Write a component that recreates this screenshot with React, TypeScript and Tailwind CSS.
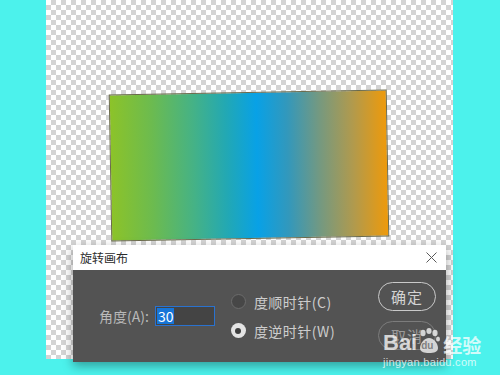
import React from 'react';

const CJK = "font-['Noto_Sans_CJK_SC','Noto_Sans',sans-serif]";

function CloseIcon() {
  return (
    <svg width="11" height="11" viewBox="0 0 11 11" className="shrink-0">
      <path d="M0.5 0.5 L10.5 10.5 M10.5 0.5 L0.5 10.5" stroke="#5a5a5a" strokeWidth="1" />
    </svg>
  );
}

function Radio({ checked, label }: { checked: boolean; label: string }) {
  return (
    <div className="flex h-[20px] items-center gap-[8px]">
      {checked ? (
        <span className="flex h-[15px] w-[15px] items-center justify-center rounded-full bg-[#e4e4e4]">
          <span className="h-[6px] w-[6px] rounded-full bg-[#3f3f3f]" />
        </span>
      ) : (
        <span className="h-[15px] w-[15px] rounded-full border border-[#6c6c6c] bg-[#474747]" />
      )}
      <span className="text-[14px] leading-none tracking-[0.5px] text-[#cdcdcd]">{label}</span>
    </div>
  );
}

function BaiduMark() {
  return (
    <div className="pointer-events-none absolute left-[383px] top-[328px] flex flex-col items-start text-white/75">
      <div className="flex items-end">
        <span className="font-['Liberation_Sans',sans-serif] text-[22px] font-bold leading-none">Bai</span>
        <span className="relative mx-[1px] h-[26px] w-[22px]">
          <svg width="22" height="26" viewBox="0 0 22 26" className="absolute left-0 top-0">
            <g fill="rgba(255,255,255,0.75)">
              <ellipse cx="5" cy="5" rx="2.6" ry="3.2" />
              <ellipse cx="11" cy="3" rx="2.6" ry="3" />
              <ellipse cx="17" cy="5" rx="2.6" ry="3.2" />
              <ellipse cx="20" cy="11" rx="2" ry="2.6" />
              <path d="M11 10 C6 10 2 16 2 20 C2 24 6 25 11 25 C16 25 20 24 20 20 C20 16 16 10 11 10 Z" />
            </g>
          </svg>
          <span className="absolute left-[3px] top-[13px] font-['Liberation_Sans',sans-serif] text-[10px] font-bold leading-none text-[#6a6a6a]/80">du</span>
        </span>
        <span className={`${CJK} ml-[2px] text-[19px] font-bold leading-none`}>经验</span>
      </div>
      <span className="mt-[3px] font-['Liberation_Sans',sans-serif] text-[11px] leading-none tracking-[0.3px]">jingyan.baidu.com</span>
    </div>
  );
}

export default function App() {
  return (
    <div className={`relative h-[375px] w-[500px] overflow-hidden bg-[#4cf2ec] ${CJK}`}>
      <div className="ml-[46px] h-[359px] w-[407px] bg-[repeating-conic-gradient(#d4d4d4_0%_25%,#ffffff_0%_50%)] bg-[length:10px_10px] pt-[92px]">
        <div className="ml-[64px] h-[147px] w-[278px] -rotate-1 border border-[#6b6b4c] bg-[linear-gradient(90deg,#8cc329_0%,#6cbb4f_15%,#45b286_30%,#22a8b4_42%,#08a1e6_53%,#3298bc_64%,#76997f_76%,#b29a4c_88%,#ee9a0b_100%)]" />
      </div>

      <div className="absolute left-[73px] top-[245px] flex h-[117px] w-[373px] flex-col shadow-[0_4px_10px_rgba(0,0,0,0.35)]">
        <div className="flex h-[25px] items-center justify-between bg-white pl-[7px] pr-[9px]">
          <span className="text-[12px] leading-none text-[#2b2b2b]">旋转画布</span>
          <CloseIcon />
        </div>
        <div className="flex flex-1 items-center bg-[#535353] pl-[26px] pr-[10px]">
          <span className="text-[14px] leading-none text-[#b9b9b9]">角度(A):</span>
          <div className="ml-[6px] flex h-[20px] w-[60px] items-center border border-[#2a72cf] bg-[#444444] pl-[1px]">
            <span className="bg-[#1675d8] px-[1px] text-[14px] leading-[16px] text-white">30</span>
          </div>
          <div className="ml-[16px] flex flex-col gap-[9px]">
            <Radio checked={false} label="度顺时针(C)" />
            <Radio checked label="度逆时针(W)" />
          </div>
          <div className="ml-auto flex flex-col gap-[10px]">
            <button
              type="button"
              className="flex h-[29px] w-[58px] items-center justify-center rounded-full border-[1.5px] border-[#c9c9c9] text-[15px] leading-none tracking-[1px] text-[#d3d3d3]"
            >
              确定
            </button>
            <button
              type="button"
              className="flex h-[29px] w-[58px] items-center justify-center rounded-full border-[1.5px] border-[#7c7c7c] text-[15px] leading-none tracking-[1px] text-[#9a9a9a]"
            >
              取消
            </button>
          </div>
        </div>
      </div>

      <BaiduMark />
    </div>
  );
}
